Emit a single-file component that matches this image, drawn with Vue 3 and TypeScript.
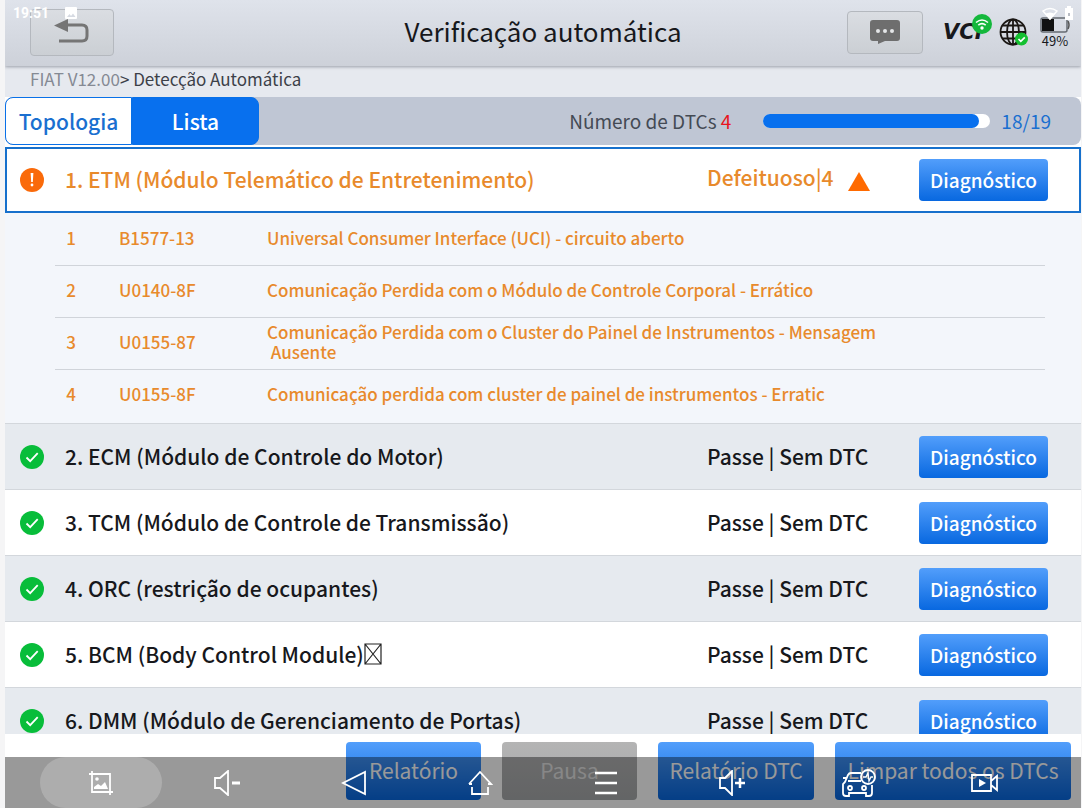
<script setup lang="ts">
import { ref } from 'vue'

interface Dtc {
  code: string
  text: string
}
interface EcuModule {
  name: string
  missingGlyph?: boolean
}

const done = 18
const total = 19
const progress = 95
const activeTab = ref<'topologia' | 'lista'>('lista')

const dtcs: Dtc[] = [
  { code: 'B1577-13', text: 'Universal Consumer Interface (UCI) - circuito aberto' },
  { code: 'U0140-8F', text: 'Comunicação Perdida com o Módulo de Controle Corporal - Errático' },
  {
    code: 'U0155-87',
    text: 'Comunicação Perdida com o Cluster do Painel de Instrumentos - Mensagem\n\u00a0Ausente',
  },
  { code: 'U0155-8F', text: 'Comunicação perdida com cluster de painel de instrumentos - Erratic' },
]

const modules: EcuModule[] = [
  { name: '2. ECM (Módulo de Controle do Motor)' },
  { name: '3. TCM (Módulo de Controle de Transmissão)' },
  { name: '4. ORC (restrição de ocupantes)' },
  { name: '5. BCM (Body Control Module)', missingGlyph: true },
  { name: '6. DMM (Módulo de Gerenciamento de Portas)' },
]
</script>

<template>
  <div class="screen">
    <header class="topbar">
      <button class="tool back" type="button" aria-label="Voltar">
        <svg width="36" height="26" viewBox="0 0 36 26">
          <path d="M14 6h14q5 0 5 5v6q0 5-5 5H5" fill="none" stroke="#757575" stroke-width="3" />
          <path d="M0 6.500 14 0v13z" fill="#757575" />
        </svg>
      </button>
      <h1>Verificação automática</h1>
      <div class="tools">
        <button class="tool chat" type="button" aria-label="Mensagens">
          <svg width="32" height="26" viewBox="0 0 32 26">
            <path d="M4 1h24q3 0 3 3v15q0 3-3 3H16l-7 3v-3H4q-3 0-3-3V4q0-3 3-3z" fill="#6e6e6e" />
            <circle cx="9" cy="12" r="2" fill="#e4e6e8" />
            <circle cx="16" cy="12" r="2" fill="#e4e6e8" />
            <circle cx="23" cy="12" r="2" fill="#e4e6e8" />
          </svg>
        </button>
        <div class="vci">
          <span>VCI</span>
          <svg class="vci-badge" width="20" height="20" viewBox="0 0 20 20">
            <circle cx="10" cy="10" r="10" fill="#14b83c" />
            <path d="M4 8.500q6-5 12 0M6.300 11.200q3.700-3 7.400 0" fill="none" stroke="#fff" stroke-width="1.600" />
            <circle cx="10" cy="14" r="1.700" fill="#fff" />
          </svg>
        </div>
        <svg class="globe" width="30" height="28" viewBox="0 0 30 28">
          <g fill="none" stroke="#1b1714" stroke-width="1.800">
            <circle cx="14" cy="14" r="12.500" />
            <ellipse cx="14" cy="14" rx="6" ry="12.500" />
            <path d="M14 1.500v25M1.500 14h25M3.500 7.500h21M3.500 20.500h21" />
          </g>
          <circle cx="22.500" cy="21" r="6.500" fill="#14c030" />
          <path d="m19.500 21 2.300 2.300 4-4" fill="none" stroke="#fff" stroke-width="1.700" />
        </svg>
        <div class="battery">
          <svg width="30" height="16" viewBox="0 0 30 16">
            <rect x="1" y="1" width="26" height="14" rx="2" fill="none" stroke="#666b72" stroke-width="1.500" />
            <rect x="2" y="2" width="12" height="12" fill="#111" />
            <path d="M28 4q2 4 0 8" fill="none" stroke="#555" stroke-width="1.500" />
          </svg>
          <span>49%</span>
        </div>
      </div>
    </header>

    <div class="status">
      <span>19:51</span>
      <svg width="12" height="12" viewBox="0 0 12 12">
        <rect width="12" height="12" rx="1" fill="#fff" />
        <path d="m2 10 2.500-3 1.500 2 2-2.500L10.500 10z" fill="#d6dae2" />
      </svg>
      <svg class="wifi" width="16" height="13" viewBox="0 0 16 13">
        <path d="M1 4q7-5 14 0L8 12z" fill="none" stroke="#fff" stroke-width="1.500" />
        <path d="M3 7q5-3 10 0l-5 6z" fill="#fff" />
      </svg>
      <svg width="8" height="14" viewBox="0 0 8 14">
        <path d="M2 0h4v2h2v12H0V2h2z" fill="#fff" />
        <path d="M3 7h2v3H3z" fill="#b8bcc4" />
      </svg>
    </div>

    <nav class="crumb"><a href="#">FIAT V12.00</a>&gt; Detecção Automática</nav>

    <section class="bar">
      <div class="tabs">
        <button type="button" :class="{ on: activeTab === 'topologia' }" @click="activeTab = 'topologia'">Topologia</button>
        <button type="button" :class="{ on: activeTab === 'lista' }" @click="activeTab = 'lista'">Lista</button>
      </div>
      <span class="count">Número de DTCs <b>4</b></span>
      <div class="track" role="progressbar" :aria-valuenow="done" :aria-valuemax="total">
        <div class="fill" :style="{ width: progress + '%' }"></div>
      </div>
      <span class="ratio">{{ done }}/{{ total }}</span>
    </section>

    <main class="list">
      <div class="row fault">
        <svg class="mark" width="24" height="24" viewBox="0 0 24 24">
          <circle cx="12" cy="12" r="12" fill="#fa6a0a" />
          <path d="M10.600 5h2.800l-.6 9h-1.600z" fill="#fff" />
          <circle cx="12" cy="17" r="1.400" fill="#fff" />
        </svg>
        <span class="name">1. ETM (Módulo Telemático de Entretenimento)</span>
        <span class="state">
          Defeituoso|4
          <svg width="22" height="19" viewBox="0 0 22 19"><path d="M11 0 22 19H0z" fill="#ff6a00" /></svg>
        </span>
        <button class="blue diag" type="button">Diagnóstico</button>
      </div>

      <div class="codes">
        <table>
          <tbody>
            <tr v-for="(d, i) in dtcs" :key="d.code">
              <td class="num">{{ i + 1 }}</td>
              <td class="code">{{ d.code }}</td>
              <td class="text">{{ d.text }}</td>
            </tr>
          </tbody>
        </table>
      </div>

      <div v-for="m in modules" :key="m.name" class="row">
        <svg class="mark" width="24" height="24" viewBox="0 0 24 24">
          <circle cx="12" cy="12" r="12" fill="#08bd3a" />
          <path d="m6.500 12.500 3.700 3.700 7.500-8" fill="none" stroke="#fff" stroke-width="1.800" />
        </svg>
        <span class="name">
          {{ m.name }}<svg v-if="m.missingGlyph" width="18" height="22" viewBox="0 0 18 22">
            <path d="M1 1h16v20H1zL17 21M17 1 1 21" fill="none" stroke="#222" stroke-width="1.200" />
          </svg>
        </span>
        <span class="state">Passe | Sem DTC</span>
        <button class="blue diag" type="button">Diagnóstico</button>
      </div>
    </main>

    <footer class="actions">
      <button class="blue" type="button">Relatório</button>
      <button class="grey" type="button">Pausa</button>
      <button class="blue mid" type="button">Relatório DTC</button>
      <button class="blue wide" type="button">Limpar todos os DTCs</button>
    </footer>

    <nav class="system">
      <button class="pill" type="button" aria-label="Captura">
        <svg width="26" height="26" viewBox="0 0 26 26">
          <path d="M4 1v21h21M1 4h21v21" />
          <circle cx="9" cy="9" r="1.800" class="solid" />
          <path class="solid" d="M6 19v-2l4-3 3 2 4-4 3 7z" />
        </svg>
      </button>
      <button type="button" aria-label="Diminuir volume">
        <svg width="28" height="26" viewBox="0 0 28 26">
          <path d="M2 8h5l8-7v24l-8-7H2z" /><path d="M19 13h8" stroke-width="3" />
        </svg>
      </button>
      <button type="button" aria-label="Anterior">
        <svg width="26" height="26" viewBox="0 0 26 26"><path d="M24 2v22L2 13z" /></svg>
      </button>
      <button type="button" aria-label="Início">
        <svg width="26" height="26" viewBox="0 0 26 26"><path d="M2 14 13 2l11 12h-3M5 14H2M5 17v7h16v-7" /></svg>
      </button>
      <button type="button" aria-label="Menu">
        <svg width="26" height="26" viewBox="0 0 26 26"><path d="M2 3h22M2 13h22M2 23h22" stroke-width="2.500" /></svg>
      </button>
      <button type="button" aria-label="Aumentar volume">
        <svg width="26" height="26" viewBox="0 0 26 26">
          <path d="M1 8h5l7-7v24l-7-7H1z" /><path d="M16 13h10M21 8v10" stroke-width="2.500" />
        </svg>
      </button>
      <button type="button" aria-label="Veículo">
        <svg width="34" height="28" viewBox="0 0 34 28">
          <path d="M19 4H9q-2 0-3 2l-3 7-2 2v9q0 3 3 3h3v-3h17v3h3q3 0 3-3v-8M1 9h4M6 12h13" />
          <circle cx="8" cy="19" r="2" /><circle cx="22" cy="19" r="2" />
          <circle cx="26" cy="8" r="7" />
          <path d="M21 8h3l2-4 1 8 2-4h2" stroke-width="1.300" />
        </svg>
      </button>
      <button type="button" aria-label="Gravar tela">
        <svg width="28" height="20" viewBox="0 0 28 20">
          <path d="M1 2h19v16H1zM20 8l6-5v14l-6-5" /><path class="solid" d="M8 6v8l7-4z" />
        </svg>
      </button>
    </nav>
  </div>
</template>

<style>
body {
  margin: 0;
  background: #f5f5f6;
}
</style>

<style scoped>
.screen {
  position: relative;
  display: flex;
  flex-direction: column;
  height: 100vh;
  margin: 0 1px 0 5px;
  overflow: hidden;
  background: #fff;
  color: #17181c;
  font-family: "Noto Sans CJK SC", "Noto Sans", sans-serif;
}
* {
  box-sizing: border-box;
}
svg {
  flex: none;
}
button {
  padding: 0;
  border: 0;
  font-family: inherit;
  cursor: pointer;
}
.topbar {
  position: relative;
  z-index: 1;
  display: grid;
  grid-template-columns: 1fr auto 1fr;
  align-items: center;
  height: 66px;
  flex: none;
  padding: 0 11px 2px 11px;
  background: linear-gradient(#dfe3eb, #cdd1d9);
  box-shadow: 0 1px 3px #9a9fa8;
}
h1 {
  margin: 0;
  padding-bottom: 2px;
  font-size: 26px;
  font-weight: 400;
  line-height: 40px;
}
.tool {
  display: flex;
  align-items: center;
  justify-content: center;
  border: 1px solid #b4b8be;
  border-radius: 4px;
  background: linear-gradient(#dadde2, #cbcfd4);
}
.back {
  width: 84px;
  height: 47px;
  margin-left: 14px;
}
.chat {
  width: 76px;
  height: 43px;
  margin-right: 20px;
}
.tools {
  display: flex;
  align-items: center;
  justify-content: flex-end;
}
.vci {
  position: relative;
  width: 50px;
  margin-right: 6px;
  font: italic bold 21px/28px "DejaVu Sans", sans-serif;
}
.vci-badge {
  position: absolute;
  top: -4px;
  right: 1px;
}
.globe {
  margin-right: 11px;
}
.battery {
  display: flex;
  flex-direction: column;
  align-items: center;
  width: 30px;
  padding-top: 2px;
  font-size: 13px;
  line-height: 16px;
}
.status {
  position: absolute;
  z-index: 2;
  top: 4px;
  left: 8px;
  right: 8px;
  display: flex;
  align-items: center;
  gap: 16px;
  color: #fff;
  font: bold 14px/18px Roboto, sans-serif;
}
.status .wifi {
  margin-left: auto;
}
.status svg:last-child {
  margin-left: -9px;
}
.crumb {
  flex: none;
  height: 31px;
  padding-left: 25px;
  background: #e6e9ef;
  color: #3c4048;
  font-size: 17px;
  line-height: 26px;
}
.crumb a {
  color: #858a94;
  text-decoration: none;
}
.bar {
  display: flex;
  align-items: center;
  flex: none;
  height: 48px;
  padding-right: 30px;
  border-radius: 8px;
  background: #bfc6d4;
  font-size: 19px;
  margin-bottom: 2px;
}
.tabs {
  display: flex;
  height: 48px;
  margin-right: auto;
}
.tabs button {
  width: 127px;
  border: 1px solid #0870e8;
  border-radius: 8px 0 0 8px;
  background: #fff;
  color: #1a6fd0;
  font-size: 21px;
  font-weight: 500;
}
.tabs button + button {
  border-radius: 0 8px 8px 0;
}
.tabs .on {
  background: #0870ee;
  color: #fff;
}
.count,
.ratio {
  padding-bottom: 2px;
}
.count {
  color: #444a54;
}
.count b {
  color: #e81420;
  font-weight: 400;
}
.track {
  width: 227px;
  height: 14px;
  margin: 0 11px 0 32px;
  border-radius: 7px;
  background: #fff;
}
.fill {
  height: 14px;
  border-radius: 7px;
  background: #0870ee;
}
.ratio {
  color: #1a6fd0;
}
.list {
  flex: 1;
  min-height: 0;
  overflow: hidden;
}
.row {
  display: grid;
  grid-template-columns: 45px 1fr 212px 129px;
  align-items: center;
  height: 66px;
  padding: 0 33px 0 15px;
  border-top: 1px solid #d3d7dc;
  background: #fff;
  font-size: 21px;
  font-weight: 500;
  line-height: 30px;
}
.row:nth-child(odd) {
  background: #e6eaef;
}
.list .fault {
  padding: 0 31px 0 13px;
  border: 2px solid #1670cc;
  background: #fff;
  color: #e88a2c;
}
.name,
.state {
  display: flex;
  align-items: center;
  padding-bottom: 2px;
  white-space: nowrap;
}
.fault .state {
  gap: 14px;
  padding-bottom: 6px;
}
.fault .state svg {
  margin-top: 8px;
}
.blue {
  border-radius: 4px;
  background: linear-gradient(#529efb, #0868e0);
  color: #fff;
}
.diag {
  height: 42px;
  padding-bottom: 1px;
  font-size: 19px;
  font-weight: 500;
}
.codes {
  padding: 0 36px 2px 50px;
  background: #f3f6fb;
}
table {
  width: 100%;
  border-collapse: collapse;
  color: #e88a2c;
  font-size: 17px;
  font-weight: 500;
  line-height: 20px;
}
td {
  height: 52px;
  padding: 0 0 2px;
  border-top: 1px solid #d0d4da;
}
tr:first-child td {
  border-top: 0;
}
.num {
  width: 32px;
  text-align: center;
}
.code {
  width: 180px;
  padding-left: 32px;
}
.text {
  white-space: pre-line;
}
.actions {
  display: flex;
  justify-content: flex-end;
  gap: 21px;
  flex: none;
  height: 74px;
  padding: 8px 10px;
  background: #fff;
}
.actions button {
  width: 135px;
  height: 58px;
  padding-bottom: 2px;
  border-radius: 4px;
  font-size: 21px;
}
.actions .mid {
  width: 156px;
}
.actions .wide {
  width: 236px;
}
.actions .grey {
  background: linear-gradient(#b4b4b4, #a6a8aa);
  color: #e2e2e2;
}
.system {
  position: absolute;
  left: 0;
  right: 0;
  bottom: 0;
  display: grid;
  grid-template-columns: repeat(8, 1fr);
  height: 51px;
  padding: 0 33px;
  background: rgba(0, 0, 0, 0.4);
}
.system button {
  display: flex;
  align-items: center;
  justify-content: center;
  margin: 0 2px;
  border-radius: 26px;
  background: none;
}
.system .pill {
  background: rgba(255, 255, 255, 0.2);
}
.system svg {
  fill: none;
  stroke: #fff;
  stroke-width: 1.8;
}
.system .solid {
  fill: #fff;
  stroke: none;
}
</style>
